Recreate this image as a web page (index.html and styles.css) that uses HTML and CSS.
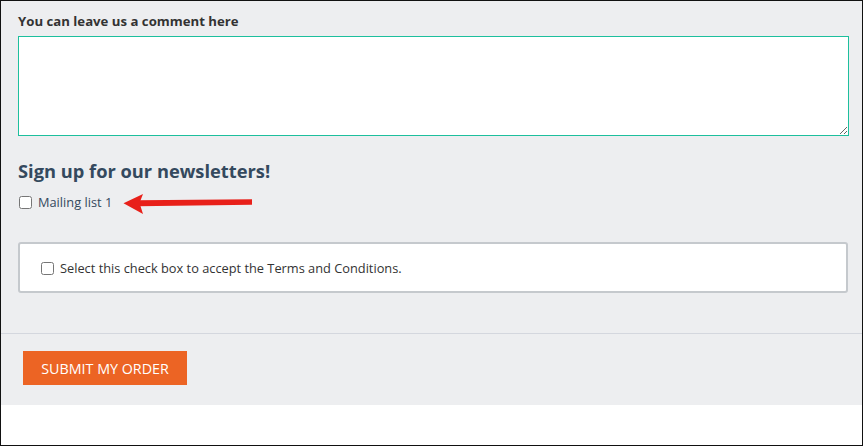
FILE: index.html
```html
<!DOCTYPE html>
<html>
<head>
<meta charset="utf-8">
<link rel="stylesheet" href="styles.css">
</head>
<body>
<div class="frame">
  <div class="form-main">
    <label class="field-label" for="comment">You can leave us a comment here</label>
    <textarea id="comment" class="comment" autofocus></textarea>
    <h2 class="news-title">Sign up for our newsletters!</h2>
    <div class="check-row">
      <input type="checkbox" id="ml1" class="cb cb-ml">
      <label for="ml1" class="ml-label">Mailing list 1</label>
      <svg class="arrow" width="134" height="22" viewBox="0 0 134 22">
        <polygon points="2.5,10.3 22,1 18.5,10 22,21" fill="#e8201a"/>
        <polygon points="17,7.3 131,6.3 131,11.7 17,13.2" fill="#e8201a"/>
      </svg>
    </div>
    <div class="terms-box">
      <div class="check-row">
        <input type="checkbox" id="terms" class="cb">
        <label for="terms" class="terms-label">Select this check box to accept the Terms and Conditions.</label>
      </div>
    </div>
  </div>
  <div class="form-actions">
    <button class="submit">SUBMIT MY ORDER</button>
  </div>
</div>
</body>
</html>
```
FILE: styles.css
```css
html, body {
  margin: 0;
  padding: 0;
  background: #fff;
}
.frame {
  width: 863px;
  height: 446px;
  box-sizing: border-box;
  border: 1px solid #111;
  font-family: "Open Sans", "Liberation Sans", sans-serif;
  background: #fff;
}
.form-main {
  background: #edeef0;
  padding: 11px 13px 40px 17px;
}
.field-label {
  display: block;
  font-size: 13.2px;
  line-height: 18px;
  font-weight: 700;
  color: #333;
  margin-bottom: 6px;
}
.comment {
  display: block;
  width: 100%;
  height: 100px;
  box-sizing: border-box;
  border: 1px solid #1dbf9d;
  background: #fff;
  margin: 0;
  padding: 4px 8px;
  font-family: inherit;
  font-size: 13px;
  color: #333;
  caret-color: #333;
  resize: both;
  outline: none;
}
.news-title {
  margin: 23px 0 10px 0;
  font-size: 18.3px;
  line-height: 24px;
  font-weight: 700;
  color: #34495e;
}
.check-row {
  display: flex;
  align-items: center;
  height: 18px;
  font-size: 12.8px;
  line-height: 18px;
}
.cb {
  margin: 0 6px 0 0;
  width: 13px;
  height: 13px;
}
.cb-ml {
  margin-left: 1px;
}
.ml-label {
  color: #34495e;
}
.arrow {
  display: block;
  margin-left: 9px;
  margin-top: 4px;
}
.terms-box {
  margin-top: 31px;
  margin-right: 1px;
  border: 2px solid #c5c9cd;
  border-radius: 3px;
  background: #fff;
  padding: 15px 20px 14px 21px;
}
.terms-label {
  color: #333;
}
.form-actions {
  background: #edeef0;
  border-top: 1px solid #d4d7de;
  padding: 17px 0 20px 22px;
}
.submit {
  display: block;
  width: 164px;
  height: 34px;
  border: none;
  border-radius: 0;
  background: #ec6424;
  color: #fff;
  font-family: "Open Sans", "Liberation Sans", sans-serif;
  font-size: 14.3px;
  padding: 0;
  cursor: pointer;
}
```
